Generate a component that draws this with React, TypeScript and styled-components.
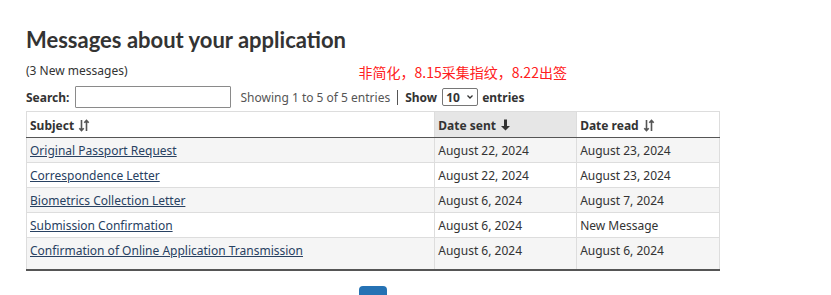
import { createGlobalStyle, styled } from "styled-components";

const GlobalStyle = createGlobalStyle`
  html, body {
    margin: 0;
    padding: 0;
    background: #ffffff;
  }
  body {
    font-family: "Noto Sans", "Liberation Sans", sans-serif;
    color: #333333;
  }
`;

const Page = styled.div`
  width: 831px;
  height: 295px;
  overflow: hidden;
  padding: 25px 0 0 26px;
  box-sizing: border-box;
`;

const Content = styled.div`
  width: 694px;
`;

const Title = styled.h1`
  margin: 0;
  font-family: "Lato", "Noto Sans", sans-serif;
  font-size: 22px;
  line-height: 30px;
  font-weight: 700;
  color: #333333;
`;

const SubRow = styled.div`
  display: flex;
  align-items: center;
  margin-top: 5px;
  height: 20px;
`;

const NewCount = styled.span`
  font-size: 12px;
  color: #333333;
`;

const Note = styled.span`
  margin-left: 231px;
  margin-top: 3px;
  font-family: "Noto Sans CJK SC", "Noto Sans", sans-serif;
  font-size: 14px;
  color: #ff2020;
`;

const Toolbar = styled.div`
  display: flex;
  align-items: center;
  margin-top: 6px;
  height: 22px;
  font-size: 12px;
`;

const Label = styled.span`
  font-weight: 700;
  color: #333333;
`;

const SearchInput = styled.input`
  box-sizing: border-box;
  width: 156px;
  height: 22px;
  margin: 0 9px 0 6px;
  border: 1px solid #8a8a8a;
  border-radius: 1px;
  padding: 0 4px;
  font: inherit;
`;

const Info = styled.span`
  color: #555555;
  font-size: 12px;
`;

const Divider = styled.span`
  width: 1px;
  height: 15px;
  background: #555555;
  margin: 0 7px;
`;

const Select = styled.div`
  box-sizing: border-box;
  display: flex;
  align-items: center;
  justify-content: space-between;
  width: 36px;
  height: 18px;
  margin: 0 4px 0 5px;
  padding: 0 3px 0 3px;
  border: 1px solid #767676;
  border-radius: 2px;
  font-weight: 700;
  font-size: 12px;
  color: #333333;
`;

const Table = styled.table`
  width: 694px;
  margin-top: 3px;
  border-collapse: collapse;
  font-size: 12px;
  border-bottom: 2px solid #555555;
`;

const HeadCell = styled.th<{ $sorted?: boolean; $width: number }>`
  width: ${(p) => p.$width}px;
  text-align: left;
  font-weight: 700;
  height: 26px;
  padding: 1px 3px 0;
  box-sizing: border-box;
  border: 1px solid #dddddd;
  border-bottom: 1px solid #555555;
  background: ${(p) => (p.$sorted ? "#e6e6e6" : "#ffffff")};
  color: #333333;
  white-space: nowrap;
`;

const HeadInner = styled.span`
  display: inline-flex;
  align-items: center;
  gap: 4px;
`;

const Row = styled.tr<{ $striped: boolean; $tall?: boolean }>`
  background: ${(p) => (p.$striped ? "#f5f5f5" : "#ffffff")};
  height: ${(p) => (p.$tall ? 32 : 25)}px;
`;

const Cell = styled.td<{ $tall?: boolean }>`
  border: 1px solid #dddddd;
  border-bottom-color: ${(p) => (p.$tall ? "#555555" : "#dddddd")};
  padding: ${(p) => (p.$tall ? "4px 3px 10px" : "4px 3px 2px")};
  vertical-align: top;
  color: #333333;
  line-height: 17px;
`;

const Link = styled.a`
  color: #284162;
  text-decoration: underline;
  text-underline-offset: 1px;
`;

const Pager = styled.div`
  display: flex;
  justify-content: center;
  margin-top: 15px;
`;

const PageButton = styled.span`
  display: block;
  width: 28px;
  height: 28px;
  border-radius: 4px;
  background: #2572b4;
`;

const SortBoth = () => (
  <svg width="12" height="13" viewBox="0 0 12 13" fill="none" stroke="#555" strokeWidth="1.6">
    <path d="M3.5 1v10.5M1.3 9.2l2.2 2.4 2.2-2.4" />
    <path d="M8.5 12V1.5M6.3 3.8l2.2-2.4 2.2 2.4" />
  </svg>
);

const SortDown = () => (
  <svg width="11" height="12" viewBox="0 0 11 12" fill="#333">
    <path d="M4 0.5h3v6.5h3L5.5 11.5 1 7h3z" />
  </svg>
);

const messages = [
  { subject: "Original Passport Request", sent: "August 22, 2024", read: "August 23, 2024" },
  { subject: "Correspondence Letter", sent: "August 22, 2024", read: "August 23, 2024" },
  { subject: "Biometrics Collection Letter", sent: "August 6, 2024", read: "August 7, 2024" },
  { subject: "Submission Confirmation", sent: "August 6, 2024", read: "New Message" },
  {
    subject: "Confirmation of Online Application Transmission",
    sent: "August 6, 2024",
    read: "August 6, 2024",
  },
];

export default function App() {
  return (
    <>
      <GlobalStyle />
      <Page>
        <Content>
          <Title>Messages about your application</Title>
          <SubRow>
            <NewCount>(3 New messages)</NewCount>
            <Note>非简化，8.15采集指纹，8.22出签</Note>
          </SubRow>
          <Toolbar>
            <Label>Search:</Label>
            <SearchInput type="search" />
            <Info>Showing 1 to 5 of 5 entries</Info>
            <Divider />
            <Label>Show</Label>
            <Select>
              <span>10</span>
              <svg width="8" height="6" viewBox="0 0 8 6" fill="none" stroke="#333" strokeWidth="1.3">
                <path d="M1.5 1.5L4 4l2.5-2.5" />
              </svg>
            </Select>
            <Label>entries</Label>
          </Toolbar>
          <Table>
            <thead>
              <tr>
                <HeadCell $width={409}>
                  <HeadInner>
                    Subject <SortBoth />
                  </HeadInner>
                </HeadCell>
                <HeadCell $width={142} $sorted>
                  <HeadInner>
                    Date sent <SortDown />
                  </HeadInner>
                </HeadCell>
                <HeadCell $width={143}>
                  <HeadInner>
                    Date read <SortBoth />
                  </HeadInner>
                </HeadCell>
              </tr>
            </thead>
            <tbody>
              {messages.map((m, i) => {
                const tall = i === messages.length - 1;
                return (
                  <Row key={m.subject} $striped={i % 2 === 0} $tall={tall}>
                    <Cell $tall={tall}>
                      <Link href="#">{m.subject}</Link>
                    </Cell>
                    <Cell $tall={tall}>{m.sent}</Cell>
                    <Cell $tall={tall}>{m.read}</Cell>
                  </Row>
                );
              })}
            </tbody>
          </Table>
          <Pager>
            <PageButton />
          </Pager>
        </Content>
      </Page>
    </>
  );
}
